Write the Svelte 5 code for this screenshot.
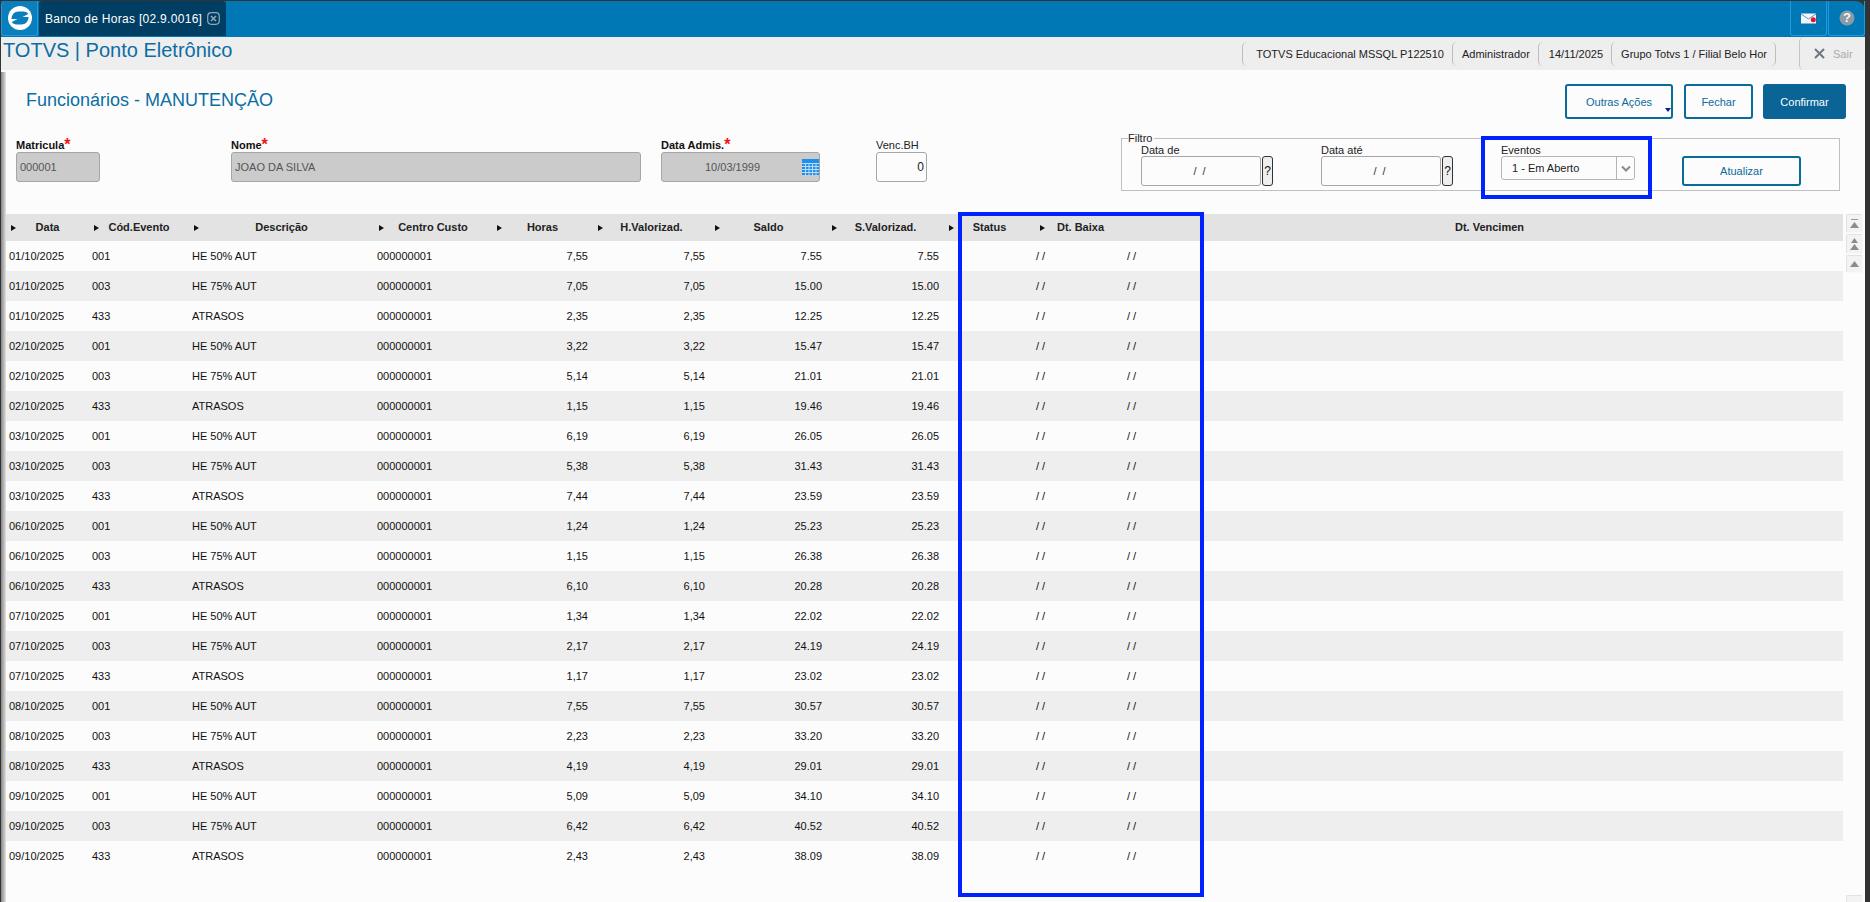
<script>
  const raw = [
    ['01', [['7,55', '7.55'], ['7,05', '15.00'], ['2,35', '12.25']]],
    ['02', [['3,22', '15.47'], ['5,14', '21.01'], ['1,15', '19.46']]],
    ['03', [['6,19', '26.05'], ['5,38', '31.43'], ['7,44', '23.59']]],
    ['06', [['1,24', '25.23'], ['1,15', '26.38'], ['6,10', '20.28']]],
    ['07', [['1,34', '22.02'], ['2,17', '24.19'], ['1,17', '23.02']]],
    ['08', [['7,55', '30.57'], ['2,23', '33.20'], ['4,19', '29.01']]],
    ['09', [['5,09', '34.10'], ['6,42', '40.52'], ['2,43', '38.09']]]
  ];
  const events = [['001', 'HE 50% AUT'], ['003', 'HE 75% AUT'], ['433', 'ATRASOS']];
  const rows = raw.flatMap(([d, vals]) =>
    vals.map(([h, s], i) => ({ date: `${d}/10/2025`, code: events[i][0], desc: events[i][1], h, s }))
  );
  const heads = ['Data', 'Cód.Evento', 'Descrição', 'Centro Custo', 'Horas', 'H.Valorizad.', 'Saldo', 'S.Valorizad.', 'Status', 'Dt. Baixa'];
</script>

<div class="app">
  <header class="topbar">
    <div class="logo">
      <svg width="26" height="26" viewBox="-13 -13 26 26">
        <circle r="12" fill="#fff" />
        <path d="M-8.500 1 C-8.500 -3.500 -5.500 -6.500 -1.500 -6.500 L3.500 -6.500 C5.500 -6.500 7.500 -5.500 8.300 -4 L-1.500 1 Z" fill="#0a7fbd" />
        <path d="M8.500 -1 C8.500 3.500 5.500 6.500 1.500 6.500 L-3.500 6.500 C-5.500 6.500 -7.500 5.500 -8.300 4 L1.500 -1 Z" fill="#0a7fbd" />
      </svg>
    </div>
    <div class="tab">
      <span class="tab-text">Banco de Horas [02.9.0016]</span>
      <svg class="tab-close" width="13" height="13" viewBox="0 0 13 13">
        <rect x=".7" y=".7" width="11.6" height="11.6" rx="3.5" fill="none" stroke="#8fa9ba" stroke-width="1.2" />
        <path d="M4 4l5 5M9 4l-5 5" stroke="#8fa9ba" stroke-width="1.6" />
      </svg>
    </div>
    <div class="top-actions">
      <div class="top-btn">
        <svg width="16" height="11" viewBox="0 0 16 11">
          <rect width="15" height="10" y=".5" fill="#f2f6f9" />
          <path d="M0 1l7.500 5L15 1" fill="none" stroke="#5a97be" stroke-width="1" />
          <circle cx="12.300" cy="6.800" r="2.500" fill="#f01020" />
        </svg>
      </div>
      <div class="top-btn">
        <svg width="16" height="16" viewBox="0 0 16 16">
          <circle cx="8" cy="8" r="7.500" fill="#8b9aa5" />
          <text x="8" y="12.400" text-anchor="middle" class="q">?</text>
        </svg>
      </div>
    </div>
  </header>

  <div class="subbar">
    <div class="brand">TOTVS | Ponto Eletrônico</div>
    <div class="info">
      <span class="seg first">TOTVS Educacional MSSQL P122510</span>
      <span class="seg">Administrador</span>
      <span class="seg date">14/11/2025</span>
      <span class="seg last">Grupo Totvs 1 / Filial Belo Hor</span>
    </div>
    <div class="logout">
      <svg width="11" height="11" viewBox="0 0 11 11"><path d="M1 1l9 9M10 1l-9 9" stroke="#6e7681" stroke-width="2" /></svg>
      <span>Sair</span>
    </div>
  </div>

  <div class="main">
    <div class="strip"></div>
    <div class="content">
      <div class="headline">
        <h1>Funcionários - MANUTENÇÃO</h1>
        <div class="actions">
          <button class="btn more">Outras Ações<i class="caret"></i></button>
          <button class="btn close">Fechar</button>
          <button class="btn primary">Confirmar</button>
        </div>
      </div>

      <div class="form">
        <div class="field f-mat">
          <label class="req">Matricula<b>*</b></label>
          <div class="input off">000001</div>
        </div>
        <div class="field f-nome">
          <label class="req">Nome<b>*</b></label>
          <div class="input off">JOAO DA SILVA</div>
        </div>
        <div class="field f-adm">
          <label class="req">Data Admis.<b>*</b></label>
          <div class="input off with-icon">
            <span class="centered">10/03/1999</span>
            <svg width="17" height="16" viewBox="0 0 17 16">
              <rect width="17" height="16" fill="#1f8fe8" />
              <path d="M0 4.500h17M0 7.500h17M0 10.500h17M0 13.500h17M3.500 4v12M7 4v12M10.500 4v12M14 4v12" stroke="#b9dcf8" stroke-width="1" />
            </svg>
          </div>
        </div>
        <div class="field f-venc">
          <label>Venc.BH</label>
          <div class="input num">0</div>
        </div>
        <fieldset class="filter">
          <legend>Filtro</legend>
          <div class="filter-row">
            <div class="field">
              <label class="tight">Data de</label>
              <div class="date-pick">
                <div class="input date-in">/ /</div>
                <button class="help">?</button>
              </div>
            </div>
            <div class="field">
              <label class="tight">Data até</label>
              <div class="date-pick">
                <div class="input date-in">/ /</div>
                <button class="help">?</button>
              </div>
            </div>
            <div class="field events">
              <label class="tight">Eventos</label>
              <div class="select">
                <span>1 - Em Aberto</span>
                <i class="chev">
                  <svg width="10" height="7" viewBox="0 0 10 7"><path d="M1 1.500l4 4 4-4" fill="none" stroke="#8a8a8a" stroke-width="2" /></svg>
                </i>
              </div>
              <div class="mark mark-events"></div>
            </div>
            <button class="btn refresh">Atualizar</button>
          </div>
        </fieldset>
      </div>

      <div class="table-area">
        <div class="grid">
          <div class="row head">
            {#each heads as h}
              <div class="th"><i class="arrow"></i><span>{h}</span></div>
            {/each}
            <div class="th last">Dt. Vencimen</div>
          </div>
          {#each rows as r}
            <div class="row">
              <div class="td">{r.date}</div>
              <div class="td">{r.code}</div>
              <div class="td">{r.desc}</div>
              <div class="td">000000001</div>
              <div class="td n">{r.h}</div>
              <div class="td n">{r.h}</div>
              <div class="td n">{r.s}</div>
              <div class="td n">{r.s}</div>
              <div class="td"></div>
              <div class="td d">/ /</div>
              <div class="td d">/ /</div>
            </div>
          {/each}
          <div class="mark mark-col"></div>
        </div>
        <div class="scroll">
          <div class="sb one">
            <svg width="9" height="10" viewBox="0 0 9 10"><path d="M1 .5h7" stroke="#999" /><path d="M4.500 3L9 9H0z" fill="#8c8c8c" /></svg>
          </div>
          <div class="sb two">
            <svg width="9" height="12" viewBox="0 0 9 12"><path d="M4.500 0L8 5H1zM4.500 6L9 12H0z" fill="#8c8c8c" /></svg>
          </div>
          <div class="sb three">
            <svg width="9" height="6" viewBox="0 0 9 6"><path d="M4.500 0L9 6H0z" fill="#8c8c8c" /></svg>
          </div>
          <div class="sb end"></div>
        </div>
      </div>
    </div>
  </div>
</div>

<style>
  :global(body) {
    margin: 0;
    background: #333;
  }
  .app {
    width: 1870px;
    height: 902px;
    overflow: hidden;
    display: flex;
    flex-direction: column;
    padding: 1px 5px 0 1px;
    box-sizing: border-box;
    background: #333;
    font: 11px "Liberation Sans", Arial, sans-serif;
    color: #111;
  }
  .topbar {
    height: 36px;
    flex: none;
    display: flex;
    background: #0078b6;
    border-top-right-radius: 9px;
  }
  .logo {
    width: 37px;
    height: 35px;
    box-sizing: border-box;
    display: flex;
    align-items: center;
    justify-content: center;
    background: #0a7fbd;
    border: 1px solid #1f9ae0;
    border-top: none;
    border-radius: 5px 0 3px 3px;
  }
  .tab {
    width: 187px;
    height: 35px;
    margin-left: 1px;
    display: flex;
    align-items: center;
    background: #003f63;
    border-radius: 3px 3px 0 0;
  }
  .tab-text {
    margin-left: 6px;
    color: #fff;
    font-size: 12px;
    letter-spacing: .3px;
    white-space: nowrap;
  }
  .tab-close {
    margin-left: 5px;
  }
  .top-actions {
    margin-left: auto;
    display: flex;
    margin-right: 0;
    gap: 1px;
  }
  .top-btn {
    width: 37px;
    height: 35px;
    box-sizing: border-box;
    display: flex;
    align-items: center;
    justify-content: center;
    border: 1px solid #1f9ae0;
    border-top: none;
    border-radius: 0 0 3px 3px;
  }
  .q {
    fill: #fff;
    opacity: .9;
    font: bold 13px "Liberation Sans", sans-serif;
  }
  .subbar {
    height: 33px;
    flex: none;
    display: flex;
    align-items: center;
    background: #eee;
  }
  .brand {
    margin-left: 2px;
    font-size: 20px;
    color: #0b6ea3;
    white-space: nowrap;
    margin-bottom: 6px;
  }
  .info {
    margin-left: auto;
    display: flex;
    margin-right: 23px;
    margin-top: 1px;
  }
  .seg {
    height: 24px;
    line-height: 24px;
    padding: 0 8px 0 9px;
    border-left: 1px solid #bdbdbd;
    border-radius: 5px 0 0 5px;
    white-space: nowrap;
    color: #222;
  }
  .seg.first {
    padding-left: 13px;
    padding-right: 8px;
  }
  .seg.date {
    padding-left: 10px;
  }
  .seg.last {
    border-right: 1px solid #bdbdbd;
    border-radius: 5px;
  }
  .logout {
    width: 66px;
    height: 33px;
    box-sizing: border-box;
    display: flex;
    align-items: center;
    gap: 8px;
    padding-left: 14px;
    border-left: 1px solid #c4c4c4;
    border-radius: 5px 0 0 5px;
    color: #aaa;
  }
  .main {
    flex: 1;
    min-height: 0;
    display: flex;
    background: #fcfcfc;
  }
  .strip {
    width: 5px;
    flex: none;
    margin-top: 2px;
    background: linear-gradient(90deg, #858585, #e2e2e2);
  }
  .content {
    flex: 1;
    min-width: 0;
  }
  .headline {
    height: 35px;
    padding: 14px 19px 0 20px;
    display: flex;
    align-items: center;
    justify-content: space-between;
  }
  h1 {
    margin: 0 0 2px;
    font-size: 18px;
    font-weight: 400;
    color: #0b6ea3;
  }
  .actions {
    display: flex;
    gap: 11px;
  }
  .actions .close {
    margin-right: -1px;
  }
  .btn {
    box-sizing: border-box;
    height: 35px;
    font: 11px "Liberation Sans", Arial, sans-serif;
    color: #0a6a9c;
    background: #fcfcfc;
    border: 2px solid #0a6a9c;
    border-radius: 3px;
    padding: 0;
    position: relative;
  }
  .more {
    width: 108px;
  }
  .close {
    width: 69px;
  }
  .primary {
    width: 83px;
    background: #0a6596;
    border-color: #0a6596;
    color: #fff;
  }
  .caret {
    position: absolute;
    right: 0;
    bottom: 5px;
    border: 3.5px solid transparent;
    border-bottom: none;
    border-top: 4px solid #0a1a9c;
  }
  .form {
    display: flex;
    padding-left: 10px;
    margin-top: 13px;
    height: 59px;
    align-items: flex-start;
  }
  .field {
    display: flex;
    flex-direction: column;
  }
  .f-mat, .f-nome, .f-adm, .f-venc {
    margin-top: 6px;
  }
  label {
    display: block;
    height: 14px;
    line-height: 14px;
    color: #222;
    white-space: nowrap;
  }
  label.tight {
    height: 11px;
    line-height: 11px;
  }
  label.req {
    font-weight: 700;
    color: #111;
  }
  label b {
    color: #f01414;
    font-size: 16px;
    line-height: 10px;
    font-weight: 700;
    vertical-align: -1px;
  }
  .f-mat {
    width: 84px;
  }
  .f-nome {
    width: 410px;
    margin-left: 131px;
  }
  .f-adm {
    width: 159px;
    margin-left: 20px;
  }
  .f-venc {
    width: 51px;
    margin-left: 56px;
  }
  .input {
    box-sizing: border-box;
    height: 30px;
    display: flex;
    align-items: center;
    padding: 0 3px;
    border: 1px solid #a6a6a6;
    border-radius: 3px;
    background: #fcfcfc;
    color: #222;
  }
  .off {
    background: #cbcbcb;
    color: #555;
  }
  .with-icon {
    padding: 0 0 0 1px;
  }
  .centered {
    flex: 1;
    text-align: center;
  }
  .num {
    justify-content: flex-end;
    padding-right: 2px;
    font-size: 12px;
  }
  .filter {
    margin: 0 0 0 194px;
    padding: 0 0 0 19px;
    width: 719px;
    height: 59px;
    box-sizing: border-box;
    border: 1px solid #c0c0c0;
    min-inline-size: 0;
  }
  legend {
    margin-left: -13px;
    padding: 0 2px 0 0;
    height: 13px;
    line-height: 13px;
    font-size: 11px;
    color: #222;
  }
  .filter-row {
    display: flex;
    gap: 48px;
    align-items: flex-end;
  }
  .date-pick {
    display: flex;
    gap: 1px;
  }
  .date-in {
    width: 120px;
    justify-content: center;
    padding-right: 6px;
    word-spacing: 3px;
    color: #333;
  }
  .help {
    width: 11px;
    height: 30px;
    padding: 0;
    box-sizing: border-box;
    border: 1px solid #333;
    border-radius: 3px;
    background: #eee;
    font: 12px "Liberation Sans", Arial, sans-serif;
    color: #111;
  }
  .events {
    position: relative;
    height: 41px;
  }
  .select {
    box-sizing: border-box;
    width: 134px;
    height: 24px;
    display: flex;
    align-items: center;
    justify-content: space-between;
    padding-left: 10px;
    border: 1px solid #b5b5b5;
    border-radius: 3px;
    background: #fcfcfc;
    color: #222;
  }
  .chev {
    width: 17px;
    height: 22px;
    display: flex;
    align-items: center;
    justify-content: center;
    border-left: 1px solid #b5b5b5;
  }
  .filter-row .refresh {
    width: 119px;
    height: 30px;
    margin-left: -1px;
  }
  .mark {
    position: absolute;
    box-sizing: border-box;
    border: 4px solid #0022ff;
    pointer-events: none;
  }
  .mark-events {
    left: -20px;
    top: -9px;
    width: 171px;
    height: 63px;
  }
  .table-area {
    display: flex;
    margin-top: 23px;
    align-items: flex-start;
  }
  .grid {
    width: 1837px;
    flex: none;
    position: relative;
  }
  .row {
    display: grid;
    grid-template-columns: 83px 100px 185px 118px 101px 117px 117px 117px 91px 91px 1fr;
    height: 30px;
    line-height: 30px;
    background: #fcfcfc;
  }
  .row:nth-child(odd) {
    background: #eee;
  }
  .row.head {
    height: 27px;
    line-height: 27px;
    background: #e3e3e3;
    font-weight: 700;
    color: #222;
  }
  .th {
    display: grid;
    grid-template-columns: 1fr auto 1fr;
    align-items: center;
    white-space: nowrap;
  }
  .th.last {
    display: block;
    text-align: center;
    padding-left: 10px;
  }
  .arrow {
    justify-self: start;
    margin-left: 5px;
    border: 3.5px solid transparent;
    border-right: none;
    border-left: 5px solid #111;
  }
  .td {
    padding-left: 3px;
    white-space: nowrap;
  }
  .td.n {
    padding: 0 5px 0 0;
    text-align: right;
  }
  .td.d {
    padding-left: 1px;
  }
  .mark-col {
    left: 952px;
    top: -2px;
    width: 246px;
    height: 685px;
  }
  .scroll {
    width: 17px;
    height: 688px;
    margin-left: 3px;
    display: flex;
    flex-direction: column;
    gap: 1px;
  }
  .sb {
    box-sizing: border-box;
    display: flex;
    align-items: center;
    justify-content: center;
    background: #f3f3f3;
    border: 1px solid #e2e2e2;
    border-right-color: #f8f8f8;
    border-bottom-color: #f8f8f8;
    border-radius: 2px;
  }
  .one {
    height: 19px;
  }
  .two {
    height: 20px;
  }
  .three {
    height: 18px;
  }
  .end {
    height: 20px;
    margin-top: auto;
    transform: translateY(13px);
  }
</style>
